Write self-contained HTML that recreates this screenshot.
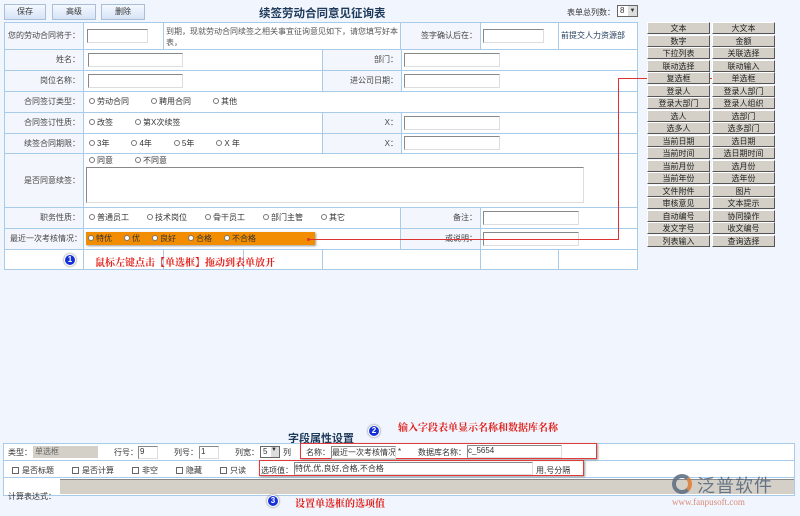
<!DOCTYPE html><html><head><meta charset="utf-8"><style>
*{margin:0;padding:0;box-sizing:border-box}
body{width:800px;height:516px;background:#f1f5fd;font-family:"Liberation Sans","Noto Sans CJK SC",sans-serif;font-size:8px;color:#333;position:relative;overflow:hidden}
.a{position:absolute;white-space:nowrap}
.btn{position:absolute;top:4px;height:16px;background:linear-gradient(#f4f8ff,#d6e3f5);border:1px solid #a9bfd9;font-size:8px;text-align:center;line-height:14px;color:#333}
.c{position:absolute;border:1px solid #a8cbe9;background:#fff;white-space:nowrap;overflow:hidden}
.lbl{background:#f3f7fd;text-align:right;padding-right:3px;color:#444}
.in{position:absolute;height:14px;border:1px solid #888;border-right-color:#ddd;border-bottom-color:#ddd;background:#fff;white-space:nowrap;overflow:hidden}
.r{display:inline-block;width:6px;height:6px;border:1px solid #777;border-radius:50%;background:#fff;margin-right:2px;vertical-align:0}
.pb{position:absolute;width:63px;height:12px;background:#d4d0c8;border:1px solid #fff;border-right-color:#555;border-bottom-color:#555;text-align:center;font-size:8px;line-height:11px;color:#222}
.red{color:#e0201a;font-weight:bold;font-family:"Liberation Serif","Noto Serif CJK SC",serif}
.num{position:absolute;width:12px;height:12px;border-radius:50%;background:#1530d8;border:1px solid #fff;box-shadow:0 0 2px #666;color:#fff;font-size:8px;text-align:center;line-height:10px;font-weight:bold}
.cb{display:inline-block;width:7px;height:7px;border:1px solid #666;background:#fff;margin-right:3px;vertical-align:-1px}
</style></head><body>
<div class="btn" style="left:4px;width:42px">保存</div>
<div class="btn" style="left:52px;width:44px">高级</div>
<div class="btn" style="left:101px;width:44px">删除</div>
<div class="a" style="left:259px;top:5px;font-size:11.5px;font-weight:bold;color:#1e3a5a">续签劳动合同意见征询表</div>
<div class="a" style="left:567px;top:7px">表单总列数：</div>
<div class="a" style="left:617px;top:5px;width:21px;height:12px;border:1px solid #666;background:#fff;line-height:10px;padding-left:2px">8<span style="position:absolute;right:0;top:0;width:9px;height:10px;background:#ddd;font-size:6px;text-align:center">▼</span></div>

<div class="a" style="left:4px;top:22px;width:634px;height:248px;border:1px solid #a8cbe9;background:#fff"></div>
<div class="c lbl" style="left:4px;top:22px;width:80px;height:28px;line-height:26px">您的劳动合同将于：</div>
<div class="c" style="left:83px;top:22px;width:81px;height:28px"></div>
<div class="in" style="left:87px;top:29px;width:61px"></div>
<div class="c" style="left:163px;top:22px;width:238px;height:28px;padding:3px 2px;line-height:11px;color:#555;white-space:normal">到期，现就劳动合同续签之相关事宜征询意见如下，请您填写好本表，</div>
<div class="c lbl" style="left:400px;top:22px;width:81px;height:28px;line-height:26px">签字确认后在：</div>
<div class="c" style="left:480px;top:22px;width:79px;height:28px"></div>
<div class="in" style="left:483px;top:29px;width:61px"></div>
<div class="c" style="left:558px;top:22px;width:80px;height:28px;line-height:26px;padding-left:2px;color:#1e3a5a">前提交人力资源部</div>

<div class="c lbl" style="left:4px;top:49px;width:80px;height:22px;line-height:20px">姓名：</div>
<div class="c" style="left:83px;top:49px;width:240px;height:22px"></div>
<div class="in" style="left:88px;top:53px;width:95px"></div>
<div class="c lbl" style="left:322px;top:49px;width:80px;height:22px;line-height:20px">部门：</div>
<div class="c" style="left:401px;top:49px;width:237px;height:22px"></div>
<div class="in" style="left:404px;top:53px;width:96px"></div>

<div class="c lbl" style="left:4px;top:70px;width:80px;height:22px;line-height:20px">岗位名称：</div>
<div class="c" style="left:83px;top:70px;width:240px;height:22px"></div>
<div class="in" style="left:88px;top:74px;width:95px"></div>
<div class="c lbl" style="left:322px;top:70px;width:80px;height:22px;line-height:20px">进公司日期：</div>
<div class="c" style="left:401px;top:70px;width:237px;height:22px"></div>
<div class="in" style="left:404px;top:74px;width:96px"></div>

<div class="c lbl" style="left:4px;top:91px;width:80px;height:22px;line-height:20px">合同签订类型：</div>
<div class="c" style="left:83px;top:91px;width:555px;height:22px;line-height:20px;padding-left:5px"><span class="r"></span>劳动合同<span style="margin-left:22px" class="r"></span>聘用合同<span style="margin-left:22px" class="r"></span>其他</div>

<div class="c lbl" style="left:4px;top:112px;width:80px;height:22px;line-height:20px">合同签订性质：</div>
<div class="c" style="left:83px;top:112px;width:240px;height:22px;line-height:20px;padding-left:5px"><span class="r"></span>改签<span style="margin-left:22px" class="r"></span>第X次续签</div>
<div class="c lbl" style="left:322px;top:112px;width:80px;height:22px;line-height:20px">X：</div>
<div class="c" style="left:401px;top:112px;width:237px;height:22px"></div>
<div class="in" style="left:404px;top:116px;width:96px"></div>

<div class="c lbl" style="left:4px;top:133px;width:80px;height:21px;line-height:19px">续签合同期限：</div>
<div class="c" style="left:83px;top:133px;width:240px;height:21px;line-height:19px;padding-left:5px"><span class="r"></span>3年<span style="margin-left:22px" class="r"></span>4年<span style="margin-left:22px" class="r"></span>5年<span style="margin-left:22px" class="r"></span>X 年</div>
<div class="c lbl" style="left:322px;top:133px;width:80px;height:21px;line-height:19px">X：</div>
<div class="c" style="left:401px;top:133px;width:237px;height:21px"></div>
<div class="in" style="left:404px;top:136px;width:96px"></div>

<div class="c lbl" style="left:4px;top:153px;width:80px;height:55px;line-height:53px">是否同意续签：</div>
<div class="c" style="left:83px;top:153px;width:555px;height:55px;padding-left:5px;line-height:14px"><span class="r"></span>同意<span style="margin-left:22px" class="r"></span>不同意</div>
<div class="in" style="left:86px;top:167px;width:498px;height:36px"></div>

<div class="c lbl" style="left:4px;top:207px;width:80px;height:22px;line-height:20px">职务性质：</div>
<div class="c" style="left:83px;top:207px;width:318px;height:22px;line-height:20px;padding-left:5px"><span class="r"></span>普通员工<span style="margin-left:18px" class="r"></span>技术岗位<span style="margin-left:18px" class="r"></span>骨干员工<span style="margin-left:18px" class="r"></span>部门主管<span style="margin-left:18px" class="r"></span>其它</div>
<div class="c lbl" style="left:400px;top:207px;width:81px;height:22px;line-height:20px">备注：</div>
<div class="c" style="left:480px;top:207px;width:158px;height:22px"></div>
<div class="in" style="left:483px;top:211px;width:96px"></div>

<div class="c lbl" style="left:4px;top:228px;width:80px;height:22px;line-height:20px;padding-right:1px">最近一次考核情况：</div>
<div class="c" style="left:83px;top:228px;width:318px;height:22px"></div>
<div class="a" style="left:86px;top:232px;width:229px;height:13px;background:#f28c00;line-height:13px;padding-left:2px;box-shadow:1px 1px 2px #999"><span class="r"></span>特优<span style="margin-left:12px" class="r"></span>优<span style="margin-left:12px" class="r"></span>良好<span style="margin-left:12px" class="r"></span>合格<span style="margin-left:12px" class="r"></span>不合格</div>
<div class="c lbl" style="left:400px;top:228px;width:81px;height:22px;line-height:20px">或说明：</div>
<div class="c" style="left:480px;top:228px;width:158px;height:22px"></div>
<div class="in" style="left:483px;top:232px;width:96px"></div>

<div class="c" style="left:4px;top:249px;width:80px;height:21px"></div>
<div class="c" style="left:83px;top:249px;width:81px;height:21px"></div>
<div class="c" style="left:163px;top:249px;width:81px;height:21px"></div>
<div class="c" style="left:243px;top:249px;width:80px;height:21px"></div>
<div class="c" style="left:322px;top:249px;width:159px;height:21px"></div>
<div class="c" style="left:480px;top:249px;width:79px;height:21px"></div>
<div class="c" style="left:558px;top:249px;width:80px;height:21px"></div>
<div class="num" style="left:64px;top:254px">1</div>
<div class="a red" style="left:95px;top:254px;font-size:10px">鼠标左键点击【单选框】拖动到表单放开</div>

<div class="a" style="left:618px;top:78px;width:105px;height:1px;background:#d33"></div>
<div class="a" style="left:618px;top:78px;width:1px;height:161px;background:#d33"></div>
<div class="a" style="left:308px;top:239px;width:311px;height:1px;background:#d33"></div>
<div class="a" style="left:307px;top:238px;width:3px;height:3px;background:#d33;border-radius:50%"></div>
<div class="a" style="left:721px;top:77px;width:3px;height:3px;background:#d33;border-radius:50%"></div>

<div id="pal"></div>
<script>
var L=["文本","数字","下拉列表","联动选择","复选框","登录人","登录大部门","选人","选多人","当前日期","当前时间","当前月份","当前年份","文件附件","审核意见","自动编号","发文字号","列表输入"];
var R=["大文本","金额","关联选择","联动输入","单选框","登录人部门","登录人组织","选部门","选多部门","选日期","选日期时间","选月份","选年份","图片","文本提示","协同操作","收文编号","查询选择"];
var h="";for(var i=0;i<18;i++){var t=22+i*12.5;h+='<div class="pb" style="left:647px;top:'+t+'px">'+L[i]+'</div><div class="pb" style="left:712px;top:'+t+'px">'+R[i]+'</div>';}
document.getElementById("pal").innerHTML=h;
</script>

<div class="a" style="left:288px;top:430px;font-size:11px;font-weight:bold;color:#1e3a5a">字段属性设置</div>
<div class="num" style="left:368px;top:425px">2</div>
<div class="a red" style="left:398px;top:419px;font-size:10px">输入字段表单显示名称和数据库名称</div>
<div class="a" style="left:3px;top:443px;width:792px;height:53px;border:1px solid #a8cbe9;background:#fff"></div>
<div class="a" style="left:3px;top:460px;width:792px;height:1px;background:#a8cbe9"></div>
<div class="a" style="left:3px;top:477px;width:792px;height:1px;background:#a8cbe9"></div>
<div class="a" style="left:8px;top:447px">类型：</div>
<div class="a" style="left:33px;top:446px;width:65px;height:12px;background:#d4d0c8;color:#666;padding-left:2px">单选框</div>
<div class="a" style="left:114px;top:447px">行号：</div><div class="in" style="left:138px;top:446px;width:20px;height:13px;padding-left:1px">9</div>
<div class="a" style="left:174px;top:447px">列号：</div><div class="in" style="left:199px;top:446px;width:20px;height:13px;padding-left:1px">1</div>
<div class="a" style="left:235px;top:447px">列宽：</div><div class="a" style="left:260px;top:446px;width:20px;height:12px;border:1px solid #666;background:#fff;padding-left:2px">5<span style="position:absolute;right:0;top:0;width:8px;height:10px;background:#ddd;font-size:6px">▼</span></div><div class="a" style="left:283px;top:447px">列</div>
<div class="a" style="left:300px;top:443px;width:297px;height:16px;border:1px solid #e03a3a;box-shadow:1px 1px 2px #999"></div>
<div class="a" style="left:306px;top:447px">名称：</div><div class="in" style="left:331px;top:446px;width:65px;height:13px">最近一次考核情况</div><div class="a" style="left:398px;top:447px">*</div>
<div class="a" style="left:418px;top:447px">数据库名称：</div><div class="in" style="left:467px;top:445px;width:95px;height:13px">c_5654</div>
<div class="a" style="left:12px;top:465px"><span class="cb"></span>是否标题</div>
<div class="a" style="left:72px;top:465px"><span class="cb"></span>是否计算</div>
<div class="a" style="left:132px;top:465px"><span class="cb"></span>非空</div>
<div class="a" style="left:176px;top:465px"><span class="cb"></span>隐藏</div>
<div class="a" style="left:220px;top:465px"><span class="cb"></span>只读</div>
<div class="a" style="left:259px;top:460px;width:325px;height:16px;border:1px solid #e03a3a;box-shadow:1px 1px 2px #999"></div>
<div class="a" style="left:261px;top:465px">选项值：</div><div class="in" style="left:294px;top:462px;width:239px;height:13px">特优,优,良好,合格,不合格</div>
<div class="a" style="left:536px;top:465px">用,号分隔</div>
<div class="a" style="left:60px;top:479px;width:734px;height:15px;background:#d4d0c8;border-top:1px solid #888"></div>
<div class="a" style="left:8px;top:491px">计算表达式：</div>
<div class="num" style="left:267px;top:495px">3</div>
<div class="a red" style="left:295px;top:495px;font-size:10px">设置单选框的选项值</div>
<div class="a" style="left:672px;top:474px;width:20px;height:20px;border-radius:50%;border:4px solid #5a6b80;border-right-color:#e07b30;opacity:.85"></div>
<div class="a" style="left:697px;top:472px;font-size:18px;color:#5a6b80;letter-spacing:1px;opacity:.9">泛普软件</div>
<div class="a" style="left:672px;top:497px;font-size:9px;color:#d88a7a;font-family:'Liberation Serif',serif">www.fanpusoft.com</div>
</body></html>
